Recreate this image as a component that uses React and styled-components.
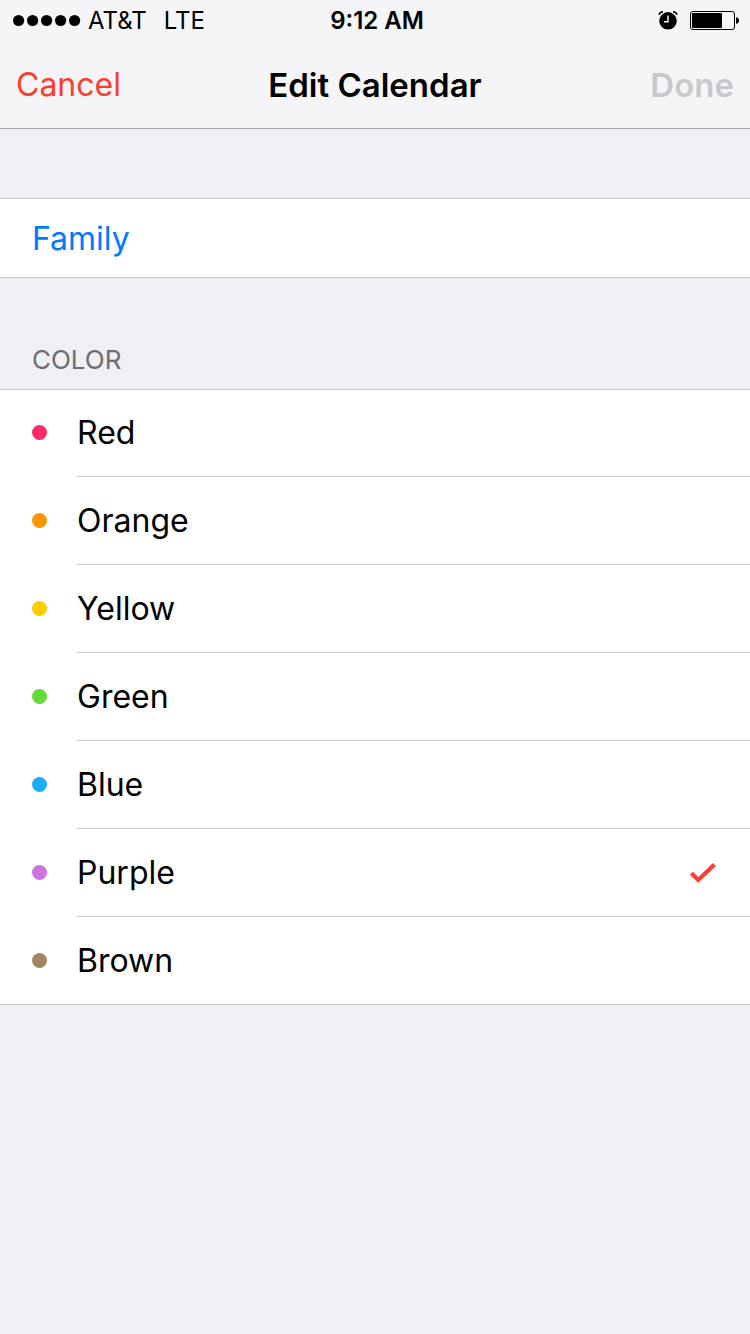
import React, { useState } from "react";
import styled, { createGlobalStyle } from "styled-components";

const GlobalStyle = createGlobalStyle`
  * {
    box-sizing: border-box;
  }
  body {
    margin: 0;
    background: #efeff4;
    color: #000;
    font-family: Inter, "Liberation Sans", sans-serif;
  }
`;

const Header = styled.header`
  background: #f5f5f7;
  border-bottom: 1px solid #a7a6ac;
`;

const StatusBar = styled.div`
  display: grid;
  grid-template-columns: 1fr auto 1fr;
  align-items: center;
  height: 42px;
  padding: 0 11px 0 13px;
  font-size: 24px;
  line-height: 42px;
`;

const Carrier = styled.div`
  display: flex;
  align-items: center;
  gap: 17px;
`;

const Signal = styled.div`
  display: flex;
  align-items: center;
  gap: 7px;
`;

const Clock = styled.div`
  padding-left: 2px;
  font-weight: 600;
`;

const StatusIcons = styled.div`
  display: flex;
  align-items: center;
  justify-content: flex-end;
  gap: 12px;
  svg {
    display: block;
  }
`;

const NavBar = styled.nav`
  display: grid;
  grid-template-columns: 1fr auto 1fr;
  align-items: center;
  height: 86px;
  padding: 0 16px;
`;

const NavButton = styled.button`
  justify-self: ${({ $end }) => ($end ? "end" : "start")};
  padding: 0;
  border: 0;
  background: none;
  color: #ff3b30;
  font-family: inherit;
  font-size: ${({ $end }) => ($end ? "33px" : "32px")};
  font-weight: ${({ $end }) => ($end ? 600 : 400)};
  line-height: 86px;
  &:disabled {
    color: #c8c8ca;
  }
`;

const Title = styled.h1`
  margin: 0;
  font-size: 33px;
  font-weight: 600;
  line-height: 86px;
`;

const Form = styled.form`
  padding-top: 69px;
`;

const NameInput = styled.input`
  display: block;
  width: 100%;
  height: 80px;
  padding: 0 32px;
  border: 0;
  border-top: 1px solid #c8c7cc;
  border-bottom: 1px solid #c8c7cc;
  border-radius: 0;
  outline: none;
  background: #fff;
  color: #007aff;
  font-family: inherit;
  font-size: 32px;
`;

const ColorGroup = styled.fieldset`
  min-width: 0;
  margin: 0;
  padding: 0;
  border: 0;
`;

const GroupLabel = styled.legend`
  width: 100%;
  padding: 66px 32px 13px;
  color: #6d6d72;
  font-size: 26px;
  line-height: 32px;
`;

const ColorRow = styled.label`
  display: flex;
  align-items: center;
  height: 88px;
  padding-left: 32px;
  background: #fff;
  cursor: pointer;
  &:first-of-type {
    box-shadow: inset 0 1px #c8c7cc;
  }
  &:last-of-type {
    box-shadow: inset 0 -1px #c8c7cc;
  }
`;

const Dot = styled.input`
  appearance: none;
  flex: none;
  width: 15px;
  height: 15px;
  margin: 0 30px 1px 0;
  border-radius: 50%;
  background: ${({ $color }) => $color};
`;

const RowBody = styled.span`
  display: flex;
  flex: 1;
  align-items: center;
  justify-content: space-between;
  height: 100%;
  padding-right: 34px;
  border-bottom: 1px solid #c8c7cc;
  font-size: 32px;
  ${ColorRow}:last-of-type & {
    border-color: transparent;
  }
`;

const COLORS = [
  { name: "Red", value: "#ff2968" },
  { name: "Orange", value: "#ff9500" },
  { name: "Yellow", value: "#ffcc00" },
  { name: "Green", value: "#63da38" },
  { name: "Blue", value: "#1badf8" },
  { name: "Purple", value: "#cc73e1" },
  { name: "Brown", value: "#a2845e" },
];

function SignalDots() {
  return (
    <svg width="68" height="14" viewBox="0 0 68 14" aria-hidden="true">
      {[0, 1, 2, 3, 4].map((i) => (
        <circle key={i} cx={5.6 + i * 14} cy="6.5" r="5.6" />
      ))}
    </svg>
  );
}

function AlarmIcon() {
  return (
    <svg width="20" height="20" viewBox="0 0 20 20" fill="none" aria-hidden="true">
      <circle cx="10" cy="9.700" r="8.800" fill="#000" />
      <path d="M10 4.500v6.200H6" stroke="#f5f5f7" strokeWidth="1.5" />
      <path
        d="M1 3.800C1.400 2 2.800 .7 5 .7M19 3.800C18.600 2 17.200 .7 15 .7"
        stroke="#000"
        strokeWidth="1.4"
      />
      <path
        d="M2 5.600C3 3.600 4.200 2.500 6 1.600M18 5.600C17 3.600 15.800 2.500 14 1.600"
        stroke="#f5f5f7"
        strokeWidth="0.9"
      />
    </svg>
  );
}

function BatteryIcon() {
  return (
    <svg width="49" height="20" viewBox="0 0 49 20" aria-hidden="true">
      <rect x="0.5" y="0.5" width="44" height="18" rx="2.5" fill="none" stroke="#000" />
      <rect x="2" y="2" width="30" height="15" rx="0.8" />
      <path d="M46 6.200c2 .2 3 1.500 3 3.300s-1 3.100-3 3.300z" />
    </svg>
  );
}

function CheckIcon() {
  return (
    <svg width="26" height="22" viewBox="0 0 26 22" fill="none" aria-hidden="true">
      <path d="M1.400 11.200L8.300 18L24.400 2.500" stroke="#ff3b30" strokeWidth="4" />
    </svg>
  );
}

export default function App() {
  const [name, setName] = useState("Family");
  const [selected, setSelected] = useState("Purple");

  return (
    <>
      <GlobalStyle />
      <Header>
        <StatusBar>
          <Carrier>
            <Signal>
              <SignalDots />
              <span>AT&amp;T</span>
            </Signal>
            <span>LTE</span>
          </Carrier>
          <Clock>9:12 AM</Clock>
          <StatusIcons>
            <AlarmIcon />
            <BatteryIcon />
          </StatusIcons>
        </StatusBar>
        <NavBar>
          <NavButton type="button">Cancel</NavButton>
          <Title>Edit Calendar</Title>
          <NavButton type="submit" form="calendar" $end disabled>
            Done
          </NavButton>
        </NavBar>
      </Header>
      <Form id="calendar">
        <NameInput
          aria-label="Calendar name"
          value={name}
          onChange={(e) => setName(e.target.value)}
        />
        <ColorGroup>
          <GroupLabel>COLOR</GroupLabel>
          {COLORS.map((color) => (
            <ColorRow key={color.name}>
              <Dot
                type="radio"
                name="color"
                value={color.name}
                $color={color.value}
                checked={selected === color.name}
                onChange={() => setSelected(color.name)}
              />
              <RowBody>
                {color.name}
                {selected === color.name && <CheckIcon />}
              </RowBody>
            </ColorRow>
          ))}
        </ColorGroup>
      </Form>
    </>
  );
}
